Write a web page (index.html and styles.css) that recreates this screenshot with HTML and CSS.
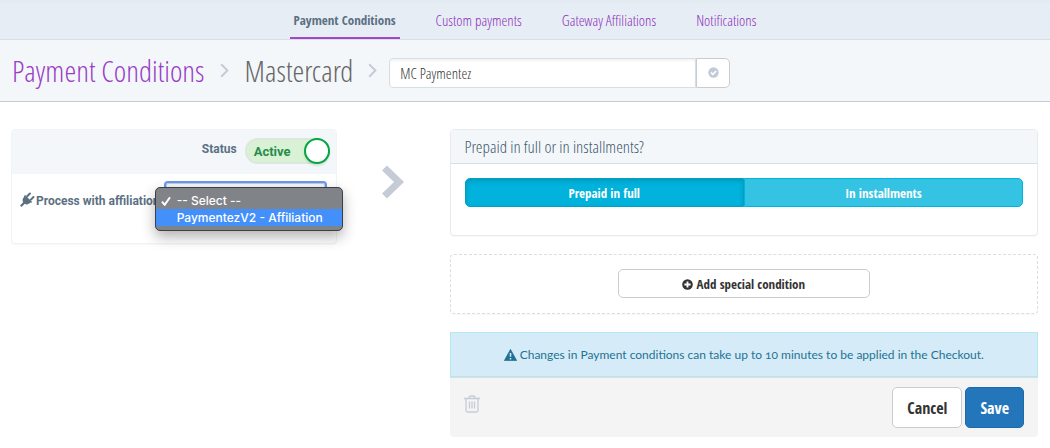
FILE: index.html
```html
<!DOCTYPE html>
<html lang="en">
<head>
    <meta charset="UTF-8">
    <meta name="viewport" content="width=device-width, initial-scale=1.0">
    <title>Payment Conditions - Mastercard</title>
    <link rel="stylesheet" href="styles.css">
</head>
<body>
    <nav class="tabs">
        <a href="#" class="tab active">Payment Conditions</a>
        <a href="#" class="tab">Custom payments</a>
        <a href="#" class="tab">Gateway Affiliations</a>
        <a href="#" class="tab">Notifications</a>
    </nav>

    <header class="page-header">
        <a href="#" class="crumb">Payment Conditions</a>
        <svg class="crumb-arrow" width="9" height="15" viewBox="0 0 9 15"><path d="M1.2 1.2 7.4 7.5 1.2 13.8"/></svg>
        <h1 class="crumb current">Mastercard</h1>
        <svg class="crumb-arrow" width="9" height="15" viewBox="0 0 9 15"><path d="M1.2 1.2 7.4 7.5 1.2 13.8"/></svg>
        <div class="name-group">
            <input type="text" class="name-input" value="MC Paymentez" aria-label="Rule name">
            <button type="button" class="name-confirm" aria-label="Confirm name">
                <svg width="11" height="11" viewBox="0 0 11 11"><circle cx="5.5" cy="5.5" r="5.2" fill="#c3cad7"/><path d="M2.9 5.5 4.8 7.4 8.2 4" fill="none" stroke="#fff" stroke-width="1.7"/></svg>
            </button>
        </div>
    </header>

    <main class="content">
        <section class="card rule-card">
            <div class="status-row">
                <label class="field-label" for="status">Status</label>
                <label class="toggle">
                    <span class="toggle-text">Active</span>
                    <input type="checkbox" id="status" class="toggle-knob" checked>
                </label>
            </div>
            <div class="affiliation-row">
                <label class="field-label" for="affiliation">
                    <svg class="plug" width="13" height="13" viewBox="0 0 13 13"><g transform="rotate(45 6.5 6.5)"><path d="M1.5 3.6h10v1.5h-.6c0 2.8-1.4 4.5-3.3 5v4.4H5.4v-4.4c-1.9-.5-3.3-2.2-3.3-5h-.6z"/><path d="M3-.9a1 1 0 0 1 2 0v4.7H3zM8-.9a1 1 0 0 1 2 0v4.7H8z"/></g></svg>
                    Process with affiliation
                </label>
                <div class="select-wrap">
                    <select id="affiliation" class="affiliation-select">
                        <option>-- Select --</option>
                        <option>PaymentezV2 - Affiliation</option>
                    </select>
                    <ul class="menu" role="listbox">
                        <li class="menu-item" role="option" aria-selected="true">
                            <svg class="check" width="10" height="10" viewBox="0 0 10 10"><path d="M1 5.7 3.7 8.8 9 1.2"/></svg>
                            -- Select --
                        </li>
                        <li class="menu-item highlighted" role="option">PaymentezV2 - Affiliation</li>
                    </ul>
                </div>
            </div>
        </section>

        <div class="flow-arrow">
            <svg width="24" height="36" viewBox="0 0 24 36"><path d="M3.5 4 18 18 3.5 32"/></svg>
        </div>

        <div class="conditions">
            <section class="card">
                <h2 class="card-title">Prepaid in full or in installments?</h2>
                <div class="card-body">
                    <div class="segmented">
                        <button type="button" class="segment selected">Prepaid in full</button>
                        <button type="button" class="segment">In installments</button>
                    </div>
                </div>
            </section>

            <section class="add-box">
                <button type="button" class="btn btn-add">
                    <svg width="11" height="11" viewBox="0 0 11 11"><circle cx="5.5" cy="5.5" r="5.3" fill="#333"/><path d="M5.5 2.4v6.2M2.4 5.5h6.2" stroke="#fff" stroke-width="1.8"/></svg>
                    Add special condition
                </button>
            </section>

            <div class="notice">
                <svg width="13" height="12" viewBox="0 0 13 12"><path d="M6.5.4 12.6 11.6H.4z" fill="#1f7292" stroke="#1f7292" stroke-width=".8" stroke-linejoin="round"/><path d="M6.5 4v3.8M6.5 9v1.6" stroke="#d5ecf8" stroke-width="1.5"/></svg>
                <p>Changes in Payment conditions can take up to 10 minutes to be applied in the Checkout.</p>
            </div>
            <footer class="actions">
                <button type="button" class="delete" aria-label="Delete">
                    <svg width="16" height="18" viewBox="0 0 16 18"><path d="M0 3.5h16M5 3.5C5 1.5 5.5 1 6.5 1h3c1 0 1.5.5 1.5 2.5M2 3.5v12c0 1 .5 1.5 1.5 1.5h9c1 0 1.5-.5 1.5-1.5v-12M5.5 6.5v7M8 6.5v7M10.5 6.5v7"/></svg>
                </button>
                <div class="buttons">
                    <button type="button" class="btn btn-large">Cancel</button>
                    <button type="submit" class="btn btn-large btn-save">Save</button>
                </div>
            </footer>
        </div>
    </main>
</body>
</html>
```
FILE: styles.css
```css
* {
    box-sizing: border-box;
}
body {
    margin: 0;
    background: #fff;
    color: #5b7083;
    font-family: Lato, "Open Sans", sans-serif;
    font-size: 12px;
}
button, input, select {
    font: inherit;
}
.tabs, .page-header, .card-title {
    font-family: "Open Sans Condensed Light", "Open Sans Condensed", sans-serif;
}
.tab.active, .segment, .btn {
    font-family: "Open Sans Condensed", sans-serif;
    font-weight: bold;
}

/* Top tabs */
.tabs {
    display: flex;
    justify-content: center;
    gap: 32px;
    height: 40px;
    background: linear-gradient(#e2e9f1, #e6edf4 4px);
    border-bottom: 1px solid #d5dfe6;
}
.tab {
    padding: 11px 4px 0;
    color: #8f2fbd;
    font-size: 15px;
    line-height: 18px;
    text-decoration: none;
}
.tab.active {
    color: #5b7083;
    font-size: 13px;
    border-bottom: 2px solid #a346c9;
}

/* Breadcrumb header */
.page-header {
    display: flex;
    align-items: center;
    padding: 0 12px;
    height: 62px;
    background: #f3f7fa;
    border-bottom: 1px solid #c5ccd8;
}
.crumb {
    margin: 0;
    color: #9a3ec6;
    font-size: 30px;
    font-weight: normal;
    line-height: 36px;
    text-decoration: none;
}
.crumb.current {
    margin-left: 4px;
    color: #666;
}
.crumb-arrow {
    margin: 0 12px 0 15px;
    fill: none;
    stroke: #c5cbd8;
    stroke-width: 2;
}
.name-group {
    display: flex;
    width: 341px;
    height: 30px;
    margin-top: 4px;
}
.name-input {
    flex: 1;
    min-width: 0;
    padding: 0 10px;
    border: 1px solid #d5dfe6;
    border-radius: 4px 0 0 4px;
    background: #fff;
    box-shadow: inset 0 2px 2px #f3f4f6;
    color: #333;
    font-size: 15px;
}
.name-confirm {
    display: flex;
    align-items: center;
    justify-content: center;
    width: 34px;
    padding: 0;
    border: 1px solid #ccc;
    border-radius: 0 5px 5px 0;
    background: #fff;
}

/* Main columns */
.content {
    display: flex;
    align-items: flex-start;
    padding: 27px 12px 0 11px;
}
.card {
    border: 1px solid #e6ebf0;
    border-radius: 4px;
    background: #fff;
    box-shadow: 0 1px 1px rgba(0, 0, 0, 0.03);
}
.rule-card {
    flex: 324;
    border-color: #f1f3f5;
}
.flow-arrow {
    flex: 113;
    display: flex;
    justify-content: center;
    padding-top: 35px;
}
.flow-arrow path {
    fill: none;
    stroke: #c5ccd8;
    stroke-width: 7;
}
.conditions {
    flex: 589;
}

.field-label, .toggle {
    font-family: Roboto, sans-serif;
    font-weight: bold;
    white-space: nowrap;
}
.field-label {
    line-height: 16px;
}
.status-row {
    display: flex;
    justify-content: flex-end;
    gap: 8px;
    height: 44px;
    padding: 8px 6px 0 0;
    background: #f3f7fa;
}
.status-row .field-label {
    padding-top: 3px;
}
.toggle {
    display: flex;
    align-items: center;
    justify-content: space-between;
    width: 85px;
    height: 26px;
    padding-left: 9px;
    border-radius: 13px;
    background: #d9f2d6;
    box-shadow: inset 0 0 0 2px #dde7de;
    color: #258d48;
    font-size: 13px;
}
.toggle-knob {
    appearance: none;
    width: 26px;
    height: 26px;
    margin: 0;
    border: 2px solid #00a83f;
    border-radius: 50%;
    background: #fff;
    box-shadow: 0 2px 2px rgba(0, 0, 0, 0.1);
}
.affiliation-row {
    display: flex;
    justify-content: space-between;
    height: 69px;
    padding: 9px 11px 0 8px;
}
.affiliation-row .field-label {
    padding-top: 10px;
}
.plug {
    fill: #5b7083;
    vertical-align: -2px;
    overflow: visible;
}
.select-wrap {
    position: relative;
    width: 159px;
}
.affiliation-select {
    width: 100%;
    height: 30px;
    border: 1px solid #c5ccd8;
    border-radius: 2px;
    background: #f3f7fa;
    color: #555;
    outline: 2px solid #6997f5;
}

/* Opened list */
.menu {
    position: absolute;
    top: 4px;
    left: -11px;
    width: 188px;
    margin: 0;
    padding: 4px 0;
    border: 1px solid #3c4045;
    border-radius: 5px;
    background: #808388;
    box-shadow: 0 6px 14px rgba(0, 0, 0, 0.3);
    color: #fff;
    font-family: Inter, Roboto, sans-serif;
    font-size: 12px;
    font-weight: 500;
    list-style: none;
}
.menu-item {
    position: relative;
    padding-left: 21px;
    line-height: 17px;
    white-space: nowrap;
}
.menu-item.highlighted {
    background: #4490fb;
}
.check {
    position: absolute;
    top: 4px;
    left: 5px;
    fill: none;
    stroke: #fff;
    stroke-width: 2;
}

/* Conditions */
.card-title {
    margin: 0;
    padding: 0 14px;
    border-bottom: 1px solid #d5dfe6;
    background: #f3f7fa;
    color: #42586b;
    font-size: 17px;
    font-weight: normal;
    line-height: 33px;
}
.card-body {
    padding: 14px 14px 28px;
}
.segmented {
    display: flex;
}
.segment {
    flex: 1;
    height: 29px;
    border: 1px solid #00b5dc;
    border-radius: 0 5px 5px 0;
    background: #34c3e2;
    color: #fff;
    font-size: 13px;
}
.segment.selected {
    border-color: #009fc4;
    border-radius: 5px 0 0 5px;
    background: #00b2dc;
    box-shadow: inset 0 2px 4px rgba(0, 0, 0, 0.15);
}
.add-box {
    display: flex;
    justify-content: center;
    margin: 18px 0;
    padding: 14px 14px 15px;
    border: 1px dashed #d5dfe6;
    border-radius: 4px;
    box-shadow: 0 1px 1px rgba(0, 0, 0, 0.03);
}
.btn {
    border: 1px solid #ccc;
    border-radius: 5px;
    background: #fff;
    color: #333;
}
.btn-add {
    width: 252px;
    height: 29px;
    font-size: 13px;
}
.btn-add svg {
    vertical-align: -1px;
}
.notice {
    display: flex;
    align-items: center;
    justify-content: center;
    gap: 3px;
    height: 45px;
    border: 1px solid #b1e8f2;
    background: #d5ecf8;
    color: #1f7292;
    font-variant-numeric: oldstyle-nums;
}
.notice p {
    margin: 0;
}
.actions {
    display: flex;
    justify-content: space-between;
    align-items: flex-start;
    padding: 9px 14px;
    border-top: 1px solid #ddd;
    border-radius: 0 0 4px 4px;
    background: #f4f4f4;
}
.delete {
    padding: 8px 0;
    border: 0;
    background: none;
}
.delete path {
    fill: none;
    stroke: #c5ccd8;
    stroke-width: 1.3;
}
.buttons {
    display: flex;
    gap: 3px;
}
.btn-large {
    height: 41px;
    padding: 0 14px;
    font-size: 16px;
}
.btn-save {
    border-color: #2068a8;
    background: #2476bb;
    color: #fff;
}
```
